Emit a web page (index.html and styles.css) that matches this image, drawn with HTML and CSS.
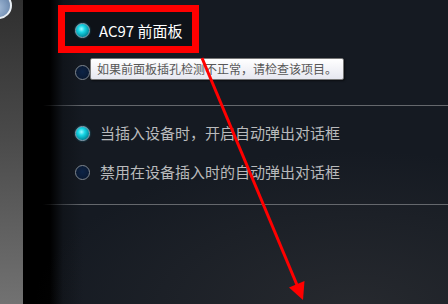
FILE: index.html
```html
<!DOCTYPE html>
<html lang="zh-CN">
<head>
    <meta charset="UTF-8">
    <meta name="viewport" content="width=device-width, initial-scale=1.0">
    <title>插孔设置</title>
    <link rel="stylesheet" href="styles.css">
</head>
<body>
    <div class="window">
        <div class="sidebar">
            <span class="sidebar-orb"></span>
        </div>

        <div class="panel">
            <div class="section section-top">
                <div class="highlight">
                    <span class="radio checked"></span>
                    <span class="label label-bright">AC97 前面板</span>
                </div>
                <div class="option option-tip">
                    <span class="radio"></span>
                    <div class="tooltip">如果前面板插孔检测不正常，请检查该项目。</div>
                </div>
            </div>

            <div class="divider"></div>

            <div class="section section-popup">
                <div class="option">
                    <span class="radio checked"></span>
                    <span class="label">当插入设备时，开启自动弹出对话框</span>
                </div>
                <div class="option">
                    <span class="radio"></span>
                    <span class="label">禁用在设备插入时的自动弹出对话框</span>
                </div>
            </div>

            <div class="divider"></div>
        </div>

        <!-- annotation arrow drawn over the screenshot -->
        <svg class="arrow" width="448" height="304" viewBox="0 0 448 304">
            <line x1="202" y1="58" x2="297" y2="285" stroke="#ff0000" stroke-width="3"/>
            <polygon points="289,287.5 304.5,281 303,300" fill="#ff0000"/>
        </svg>
    </div>
</body>
</html>
```

FILE: styles.css
```css
:root {
    --panel: #151a22;
    --red: #ff0000;
    --text-bright: #ffffff;
    --text-dim: #b9babc;
}

* {
    margin: 0;
    padding: 0;
    box-sizing: border-box;
}

body {
    font-family: "Noto Sans CJK SC", "Noto Sans", sans-serif;
    background: #000;
    overflow: hidden;
}

.window {
    position: relative;
    display: flex;
    width: 448px;
    height: 304px;
}

.sidebar {
    position: relative;
    width: 23px;
    flex-shrink: 0;
    background: linear-gradient(to bottom, #2f2f2f 0%, #4a4a4a 45%, #727272 100%);
    overflow: hidden;
}

.sidebar-orb {
    position: absolute;
    left: -15px;
    top: -8px;
    width: 27px;
    height: 27px;
    border-radius: 50%;
    border: 2px solid #e8eef4;
    background: radial-gradient(circle at 40% 60%, #a9c0da 0%, #7c98bb 55%, #5a7597 100%);
}

.panel {
    flex: 1;
    background:
        radial-gradient(ellipse 320px 160px at 330px 310px, rgba(60, 60, 62, 0.45), rgba(60, 60, 62, 0) 100%),
        linear-gradient(to right, #000 0, #000 27px, #10141a 40px, var(--panel) 60px);
}

.section-top {
    padding: 5px 0 0 35px;
    height: 105px;
}

.highlight {
    display: inline-flex;
    align-items: center;
    gap: 9px;
    height: 48px;
    padding: 3px 9px 0 10px;
    border: 7px solid var(--red);
    background: #0e1218;
}

.option {
    display: flex;
    align-items: center;
    gap: 10px;
    height: 20px;
    padding-left: 17px;
}

.option-tip {
    position: relative;
    margin-top: 9px;
}

.radio {
    width: 15px;
    height: 15px;
    flex-shrink: 0;
    border-radius: 50%;
    border: 1px solid #7d8690;
    background: radial-gradient(circle at 50% 45%, #0d2447 0%, #0a1a33 70%, #08142a 100%);
}

.radio.checked {
    border-color: #8aa6b8;
    background: radial-gradient(circle at 42% 38%, #9ff8ff 0%, #18d6e6 30%, #0496a8 65%, #035466 100%);
    box-shadow: 0 0 2px rgba(40, 200, 230, 0.5);
}

.label {
    font-size: 15px;
    line-height: 20px;
    color: var(--text-dim);
    white-space: nowrap;
}

.label-bright {
    color: var(--text-bright);
}

.tooltip {
    position: absolute;
    left: 32px;
    top: -4px;
    height: 22px;
    padding: 0 6px;
    font-size: 12px;
    line-height: 20px;
    color: #575757;
    white-space: nowrap;
    background: linear-gradient(to bottom, #ffffff 0%, #e6e7f0 100%);
    border: 1px solid #767676;
    border-radius: 2px;
    box-shadow: 1px 1px 2px rgba(0, 0, 0, 0.5);
}

.divider {
    height: 1px;
    background: linear-gradient(to right, rgba(100, 103, 108, 0) 0, rgba(100, 103, 108, 0) 20px, #65686d 60px);
}

.section-popup {
    display: flex;
    flex-direction: column;
    gap: 19px;
    padding: 17px 0 22px 35px;
}

.arrow {
    position: absolute;
    left: 0;
    top: 0;
    pointer-events: none;
}
```
